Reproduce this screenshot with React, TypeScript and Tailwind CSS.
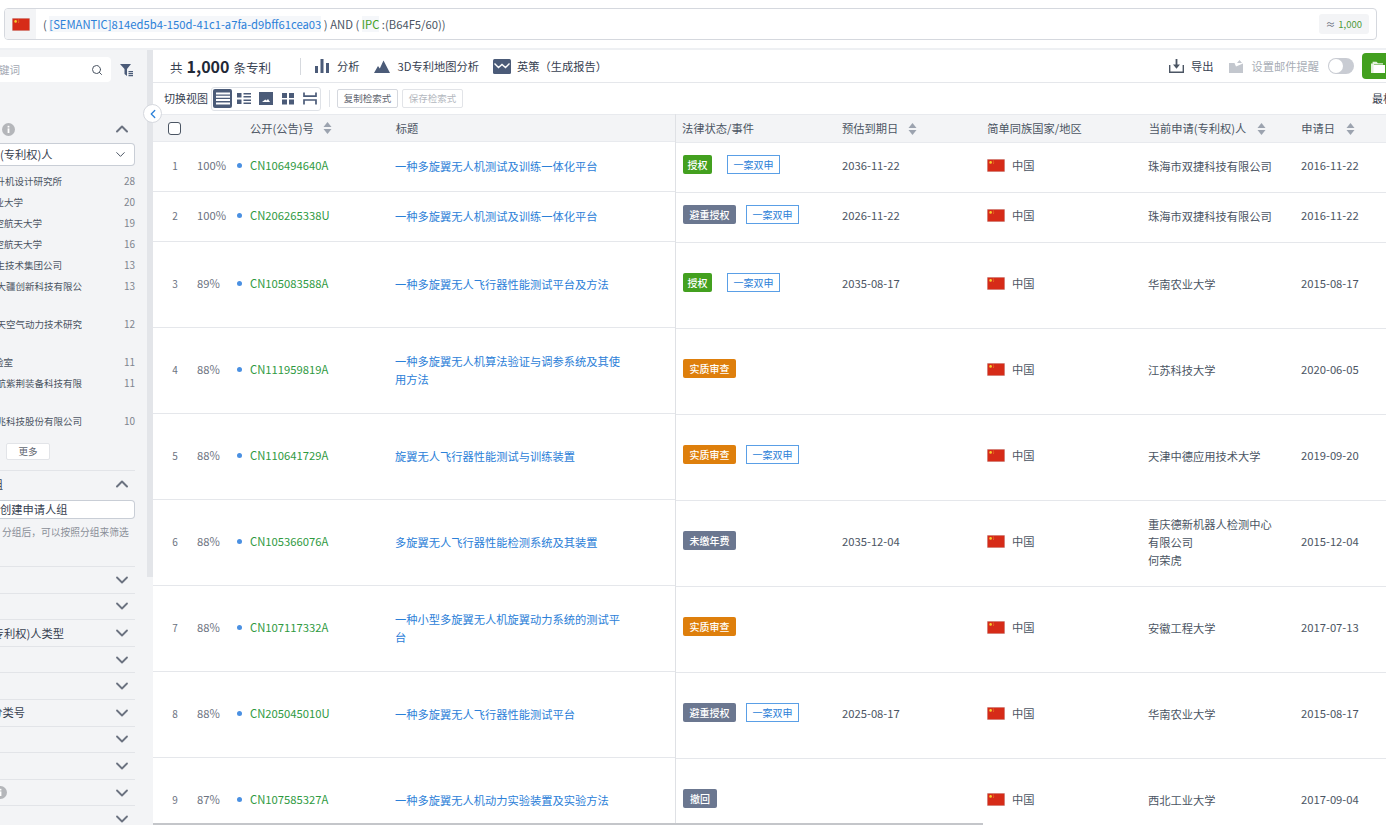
import { ChevronDown, ChevronLeft, ChevronUp, Search } from "lucide-react";

const FONT = "font-['Noto_Sans_CJK_SC','Noto_Sans',sans-serif]";

const APPLICANTS = [
  { name: "升机设计研究所", width: "w-[62px]", cnt: 28, rowH: "h-[17px]" },
  { name: "业大学", width: "w-[23px]", cnt: 20, rowH: "h-[17px]" },
  { name: "空航天大学", width: "w-[42px]", cnt: 19, rowH: "h-[17px]" },
  { name: "空航天大学", width: "w-[42px]", cnt: 16, rowH: "h-[17px]" },
  { name: "生技术集团公司", width: "w-[62px]", cnt: 13, rowH: "h-[17px]" },
  { name: "大疆创新科技有限公", width: "w-[82px]", cnt: 13, rowH: "h-[34px]" },
  { name: "天空气动力技术研究", width: "w-[82px]", cnt: 12, rowH: "h-[34px]" },
  { name: "验室", width: "w-[13px]", cnt: 11, rowH: "h-[17px]" },
  { name: "航紫荆装备科技有限", width: "w-[82px]", cnt: 11, rowH: "h-[34px]" },
  { name: "兆科技股份有限公司", width: "w-[82px]", cnt: 10, rowH: "h-[17px]" },
];

const FOLDED = [
  { label: "", width: "w-0" },
  { label: "", width: "w-0" },
  { label: "专利权)人类型", width: "w-[64px]" },
  { label: "", width: "w-0" },
  { label: "", width: "w-0" },
  { label: "分类号", width: "w-[25px]" },
  { label: "", width: "w-0" },
  { label: "", width: "w-0" },
  { label: "info", width: "w-0" },
  { label: "", width: "w-0" },
];

interface Patent {
  no: number;
  score: string;
  pn: string;
  title: string;
  status: string;
  statusCls: string;
  twin: boolean;
  expire: string;
  applicant: string[];
  date: string;
  rowL: string;
}

const GREEN = "bg-[#43a01f] w-[29px] mr-[5px]";
const GRAY = "bg-[#6b7790] w-[53px]";
const ORANGE = "bg-[#de7f0c] w-[53px]";

const PATENTS: Patent[] = [
  { no: 1, score: "100%", pn: "CN106494640A", title: "一种多旋翼无人机测试及训练一体化平台", status: "授权", statusCls: GREEN, twin: true, expire: "2036-11-22", applicant: ["珠海市双捷科技有限公司"], date: "2016-11-22", rowL: "h-[50px]" },
  { no: 2, score: "100%", pn: "CN206265338U", title: "一种多旋翼无人机测试及训练一体化平台", status: "避重授权", statusCls: GRAY, twin: true, expire: "2026-11-22", applicant: ["珠海市双捷科技有限公司"], date: "2016-11-22", rowL: "h-[50px]" },
  { no: 3, score: "89%", pn: "CN105083588A", title: "一种多旋翼无人飞行器性能测试平台及方法", status: "授权", statusCls: GREEN, twin: true, expire: "2035-08-17", applicant: ["华南农业大学"], date: "2015-08-17", rowL: "h-[86px]" },
  { no: 4, score: "88%", pn: "CN111959819A", title: "一种多旋翼无人机算法验证与调参系统及其使用方法", status: "实质审查", statusCls: ORANGE, twin: false, expire: "", applicant: ["江苏科技大学"], date: "2020-06-05", rowL: "h-[86px]" },
  { no: 5, score: "88%", pn: "CN110641729A", title: "旋翼无人飞行器性能测试与训练装置", status: "实质审查", statusCls: ORANGE, twin: true, expire: "", applicant: ["天津中德应用技术大学"], date: "2019-09-20", rowL: "h-[86px]" },
  { no: 6, score: "88%", pn: "CN105366076A", title: "多旋翼无人飞行器性能检测系统及其装置", status: "未缴年费", statusCls: GRAY, twin: false, expire: "2035-12-04", applicant: ["重庆德新机器人检测中心", "有限公司", "何荣虎"], date: "2015-12-04", rowL: "h-[86px]" },
  { no: 7, score: "88%", pn: "CN107117332A", title: "一种小型多旋翼无人机旋翼动力系统的测试平台", status: "实质审查", statusCls: ORANGE, twin: false, expire: "", applicant: ["安徽工程大学"], date: "2017-07-13", rowL: "h-[86px]" },
  { no: 8, score: "88%", pn: "CN205045010U", title: "一种多旋翼无人飞行器性能测试平台", status: "避重授权", statusCls: GRAY, twin: true, expire: "2025-08-17", applicant: ["华南农业大学"], date: "2015-08-17", rowL: "h-[86px]" },
  { no: 9, score: "87%", pn: "CN107585327A", title: "一种多旋翼无人机动力实验装置及实验方法", status: "撤回", statusCls: "bg-[#6b7790] w-[34px]", twin: false, expire: "", applicant: ["西北工业大学"], date: "2017-09-04", rowL: "h-[86px]" },
];

function Flag() {
  return (
    <svg width="18" height="13" viewBox="0 0 18 13" className="shrink-0">
      <rect width="18" height="13" fill="#d8d8d8" />
      <rect x="0.5" y="0.5" width="17" height="12" fill="#d62b18" />
      <circle cx="3.6" cy="3.4" r="1.3" fill="#f7d02c" />
      <circle cx="6.2" cy="2" r="0.4" fill="#f7d02c" />
      <circle cx="6.8" cy="3.2" r="0.4" fill="#f7d02c" />
      <circle cx="6.6" cy="4.6" r="0.4" fill="#f7d02c" />
    </svg>
  );
}

function SortIcon() {
  return (
    <svg width="9" height="12" viewBox="0 0 9 12" className="shrink-0">
      <path d="M4.5 0 L8.5 5 H0.5 Z" fill="#9ca3af" />
      <path d="M4.5 12 L8.5 7 H0.5 Z" fill="#9ca3af" />
    </svg>
  );
}

function InfoDot() {
  return (
    <svg width="13" height="13" viewBox="0 0 13 13" className="shrink-0">
      <circle cx="6.5" cy="6.5" r="6.5" fill="#b4b6ba" />
      <rect x="5.6" y="5.4" width="1.8" height="4.6" fill="#fff" />
      <rect x="5.6" y="2.8" width="1.8" height="1.7" fill="#fff" />
    </svg>
  );
}

function FilterIcon() {
  return (
    <svg width="13" height="14" viewBox="0 0 13 14" className="shrink-0">
      <path d="M0 1 H11 L7 6 V13 L4.5 11 V6 Z" fill="#4b5b78" />
      <path d="M8.5 8 H13 V9.3 H8.5 Z M8.5 10 H13 V11.3 H8.5 Z M8.5 12 H13 V13.3 H8.5 Z" fill="#4b5b78" />
    </svg>
  );
}

function ViewIcon({ kind, active }: { kind: number; active?: boolean }) {
  const c = active ? "#fff" : "#4b5b78";
  return (
    <div className={`flex h-[19px] w-[19px] items-center justify-center rounded-[2px] ${active ? "bg-[#4b5b78]" : ""}`}>
      <svg width="14" height="13" viewBox="0 0 14 13">
        {kind === 0 && <path d="M0 0.5 H14 V2.5 H0 Z M0 3.8 H14 V5.8 H0 Z M0 7.1 H14 V9.1 H0 Z M0 10.4 H14 V12.4 H0 Z" fill={c} />}
        {kind === 1 && <path d="M0 1 H4.5 V5.5 H0 Z M0 7.5 H4.5 V12 H0 Z M6.5 1 H14 V2.6 H6.5 Z M6.5 4 H14 V5.6 H6.5 Z M6.5 7.5 H14 V9.1 H6.5 Z M6.5 10.4 H14 V12 H6.5 Z" fill={c} />}
        {kind === 2 && <path fillRule="evenodd" d="M0 0 H14 V13 H0 Z M3 10 H11 L9 7 L7.6 8.4 L6.2 7.4 L5 8.6 Z" fill={c} />}
        {kind === 3 && <path d="M1 1 H6 V6 H1 Z M8 1 H13 V6 H8 Z M1 7.5 H6 V12.5 H1 Z M8 7.5 H13 V12.5 H8 Z" fill={c} />}
        {kind === 4 && <path d="M1 0.5 V4.2 H13 V0.5 M1 12.5 V8 H13 V12.5" stroke={c} strokeWidth="1.7" fill="none" />}
      </svg>
    </div>
  );
}

function Sidebar() {
  return (
    <div className="flex w-[153px] shrink-0 bg-[#f3f4f6]">
      <div className="w-[147px] shrink-0 overflow-hidden">
        <div className="w-[135px] pt-[7px]">
          <div className="flex h-[25px] items-center justify-between">
            <div className="flex h-[25px] w-[111px] items-center justify-between rounded-r-[4px] bg-white pr-[8px] text-[10.5px] text-[#a3a8b3]">
              <span className="flex w-[20px] justify-end overflow-hidden whitespace-nowrap">键词</span>
              <Search size={12} strokeWidth={2} className="text-[#4b5563]" />
            </div>
            <div className="mr-[2px]">
              <FilterIcon />
            </div>
          </div>

          <div className="mt-[37px] flex h-[20px] items-center justify-between pl-[2px] pr-[3px]">
            <InfoDot />
            <ChevronUp size={20} strokeWidth={2.4} className="text-[#6b7280]" />
          </div>
          <div className="mt-[4px] flex h-[23px] items-center justify-between rounded-r-[4px] border border-l-0 border-[#c9ced6] bg-white pr-[6px] text-[11.25px] text-[#374151]">
            <span>(专利权)人</span>
            <ChevronDown size={15} strokeWidth={1.6} className="text-[#4b5563]" />
          </div>

          <div className="mt-[7px] flex flex-col gap-[4px]">
            {APPLICANTS.map((a, i) => (
              <div key={i} className={`flex justify-between text-[9.5px] leading-[17px] text-[#4b5563] ${a.rowH}`}>
                <div className={`flex h-[17px] justify-end overflow-hidden whitespace-nowrap ${a.width}`}>{a.name}</div>
                <span className="-mt-[1px] text-[10px] text-[#80858f]">{a.cnt}</span>
              </div>
            ))}
          </div>

          <div className="mt-[13px] flex h-[17px] w-[44px] translate-x-[6px] items-center justify-center rounded-[2px] border border-[#e2e4e8] bg-white text-[9.5px] text-[#5f6670]">
            更多
          </div>

          <div className="mt-[10px] border-t border-[#e2e4e8] pt-[3px]">
            <div className="flex h-[20px] items-center justify-between pr-[3px] text-[11.25px] text-[#374151]">
              <span className="flex w-[3px] justify-end overflow-hidden">组</span>
              <ChevronUp size={20} strokeWidth={2.4} className="text-[#6b7280]" />
            </div>
          </div>
          <div className="mt-[6px] flex h-[19px] items-center rounded-r-[4px] border border-l-0 border-[#c9ced6] bg-white text-[11.25px] text-[#374151]">
            创建申请人组
          </div>
          <div className="mt-[5px] h-[42px] whitespace-nowrap pl-[2px] text-[9.75px] leading-[17px] text-[#8a8f98]">
            分组后，可以按照分组来筛选
          </div>

          {FOLDED.map((row, i) => (
            <div key={i} className="flex h-[26.6px] items-center justify-between border-t border-[#e2e4e8] pr-[3px] text-[11.25px] text-[#374151]">
              {row.label === "info" ? (
                <div className="-ml-[6px]">
                  <InfoDot />
                </div>
              ) : (
                <span className={`flex justify-end overflow-hidden whitespace-nowrap ${row.width}`}>{row.label}</span>
              )}
              <ChevronDown size={20} strokeWidth={2.2} className="text-[#6b7280]" />
            </div>
          ))}
        </div>
      </div>
      <div className="h-[527px] w-[6px] shrink-0 bg-[#e3e5e9]" />
    </div>
  );
}

function TopActions() {
  return (
    <div className="flex h-[33px] items-center justify-between border-b border-[#e5e7eb] pl-[17px] text-[11.25px] text-[#374151]">
      <div className="flex items-center">
        <div className="flex w-[130px] items-baseline whitespace-nowrap text-[12.5px]">
          共<span className="mx-[4px] text-[16px] font-bold text-[#1f2937]">1,000</span>条专利
        </div>
        <div className="h-[17px] w-px bg-[#d6d9de]" />
        <svg width="14" height="14" viewBox="0 0 14 14" className="ml-[14px]">
          <path d="M0 7 H3 V14 H0 Z M5.5 0 H8.5 V14 H5.5 Z M11 4 H14 V14 H11 Z" fill="#4b5b78" />
        </svg>
        <span className="ml-[8px]">分析</span>
        <svg width="16" height="13" viewBox="0 0 16 13" className="ml-[14px]">
          <path d="M0 13 L4 6 L5.8 8.4 L9.5 0.5 L16 13 Z" fill="#4b5b78" />
        </svg>
        <span className="ml-[8px] whitespace-nowrap">3D专利地图分析</span>
        <svg width="18" height="15" viewBox="0 0 18 15" className="ml-[14px]">
          <rect width="18" height="15" rx="1.5" fill="#4b5b78" />
          <path d="M1.5 4.5 L5.5 8.5 L9 5.5 L12.5 8.5 L16.5 4.5" stroke="#fff" strokeWidth="1.4" fill="none" />
        </svg>
        <span className="ml-[6px] whitespace-nowrap">英策（生成报告）</span>
      </div>
      <div className="-mr-[24px] flex items-center">
        <svg width="15" height="14" viewBox="0 0 15 14">
          <path d="M0.7 6 V13.2 H14.3 V6" stroke="#4b5563" strokeWidth="1.4" fill="none" />
          <path d="M6.6 0 H8.4 V5.5 H11 L7.5 9.8 L4 5.5 H6.6 Z" fill="#4b5563" />
        </svg>
        <span className="ml-[7px]">导出</span>
        <svg width="14" height="13" viewBox="0 0 14 13" className="ml-[16px]">
          <path d="M0 3 H5.5 L7 6.5 L14 3.5 V13 H0 Z M8 3 L10.5 0 L13 3 Z" fill="#c3c7ce" />
        </svg>
        <span className="ml-[8px] whitespace-nowrap text-[#a8adb6]">设置邮件提醒</span>
        <div className="ml-[9px] flex h-[16px] w-[26px] items-center rounded-full bg-[#c9ccd3] pl-[1px]">
          <div className="h-[14px] w-[14px] rounded-full bg-white" />
        </div>
        <div className="ml-[8px] flex h-[26px] w-[48px] items-center rounded-[4px] bg-[#43a01f] pl-[9px]">
          <svg width="14" height="13" viewBox="0 0 14 13">
            <path d="M0 3.5 H1.6 V1.8 H5.5 L7 3.2 H12 V4.5 H3 V13 H0 Z" fill="#fff" opacity="0.85" />
            <path d="M2.5 5 H14 V13 H2.5 Z" fill="#fff" />
          </svg>
        </div>
      </div>
    </div>
  );
}

function ViewBar() {
  return (
    <div className="flex h-[31px] items-center justify-between pl-[11px] text-[#374151]">
      <div className="flex items-center">
        <span className="whitespace-nowrap text-[11px]">切换视图</span>
        <div className="ml-[3px] flex h-[24px] w-[110px] items-center justify-between rounded-[3px] border border-[#dfe2e7] px-[1px]">
          <ViewIcon kind={0} active />
          <ViewIcon kind={1} />
          <ViewIcon kind={2} />
          <ViewIcon kind={3} />
          <ViewIcon kind={4} />
        </div>
        <div className="ml-[8px] h-[17px] w-px bg-[#e0e3e8]" />
        <div className="ml-[7px] flex h-[19px] w-[61px] items-center justify-center rounded-[2px] border border-[#d5d8de] text-[9.5px] text-[#5f6670]">
          复制检索式
        </div>
        <div className="ml-[4px] flex h-[19px] w-[61px] items-center justify-center rounded-[2px] border border-[#e2e4e8] text-[9.5px] text-[#b3b7be]">
          保存检索式
        </div>
      </div>
      <span className="w-[14px] overflow-hidden whitespace-nowrap text-[11px] text-[#374151]">最相关</span>
    </div>
  );
}

function Tag({ text, cls }: { text: string; cls: string }) {
  return (
    <div className={`flex h-[19px] items-center justify-center rounded-[2px] text-[10px] font-medium text-white ${cls}`}>
      {text}
    </div>
  );
}

function Table() {
  return (
    <div className="flex">
      <div className="w-[522px] shrink-0">
        <div className="flex h-[28px] items-center border-y border-[#e8eaee] bg-[#f3f4f6] text-[11.25px] text-[#4b5563]">
          <div className="ml-[15px] h-[13px] w-[13px] rounded-[3px] border border-[#4b5563] bg-white" />
          <span className="ml-[69px] whitespace-nowrap">公开(公告)号</span>
          <span className="ml-[9px]"><SortIcon /></span>
          <span className="ml-[64px]">标题</span>
        </div>
        {PATENTS.map((p) => (
          <div key={p.no} className={`flex items-center border-b border-[#e5e7eb] pb-[2px] text-[11.25px] ${p.rowL}`}>
            <span className="w-[44px] text-center text-[10px] text-[#6b7280]">{p.no}</span>
            <span className="w-[40px] text-[#6b7280]">{p.score}</span>
            <span className="h-[5px] w-[5px] rounded-full bg-[#4a90e2]" />
            <span className="ml-[8px] w-[145px] text-[#2f9a3f]">{p.pn}</span>
            <div className="w-[230px] leading-[18px] text-[#2b80d8]">{p.title}</div>
          </div>
        ))}
      </div>
      <div className="min-w-0 flex-1 overflow-hidden border-l border-[#dfe1e5]">
        <div className="flex h-[29px] items-center border-y border-[#e8eaee] bg-[#f3f4f6] pl-[6px] text-[11.25px] text-[#4b5563]">
          <span className="w-[160px] whitespace-nowrap">法律状态/事件</span>
          <span className="whitespace-nowrap">预估到期日</span>
          <span className="ml-[10px]"><SortIcon /></span>
          <span className="ml-[70px] whitespace-nowrap">简单同族国家/地区</span>
          <span className="ml-[67px] whitespace-nowrap">当前申请(专利权)人</span>
          <span className="ml-[11px]"><SortIcon /></span>
          <span className="ml-[35px] whitespace-nowrap">申请日</span>
          <span className="ml-[11px]"><SortIcon /></span>
        </div>
        {PATENTS.map((p) => (
          <div key={p.no} className={`flex items-center border-b border-[#e5e7eb] pb-[4px] pl-[7px] text-[11.25px] text-[#4b5563] ${p.rowL}`}>
            <div className="-mt-[2px] flex w-[159px] shrink-0 gap-[10px]">
              <Tag text={p.status} cls={p.statusCls} />
              {p.twin && (
                <div className="flex h-[19px] w-[53px] items-center justify-center border border-[#5a9fe6] text-[10px] text-[#2b80d8]">
                  一案双申
                </div>
              )}
            </div>
            <span className="w-[145px] shrink-0">{p.expire}</span>
            <div className="flex w-[161px] shrink-0 items-center gap-[7px]">
              <Flag />
              中国
            </div>
            <div className="w-[153px] shrink-0 leading-[18px]">
              {p.applicant.map((line) => (
                <div key={line} className="whitespace-nowrap">{line}</div>
              ))}
            </div>
            <span className="shrink-0">{p.date}</span>
          </div>
        ))}
      </div>
    </div>
  );
}

export default function App() {
  return (
    <div className={`relative h-[825px] w-[1386px] overflow-hidden bg-white ${FONT}`}>
      <div className="h-[50px] border-b-2 border-[#eef0f3] px-[4px] pt-[8px]">
        <div className="flex h-[32px] w-[1373px] items-center overflow-hidden rounded-[4px] border border-[#d5d8de] text-[11.25px] text-[#4b5563]">
          <div className="flex h-full w-[31px] shrink-0 items-center justify-center bg-[#f3f4f6]">
            <Flag />
          </div>
          <div className="ml-[7px] flex-1 whitespace-pre">
            {"( "}
            <span className="bg-[#f5f7fa] text-[#2b80d8]">[SEMANTIC]814ed5b4-150d-41c1-a7fa-d9bff61cea03</span>
            {" ) AND ( "}
            <span className="bg-[#f5f7fa] text-[#43a01f]">IPC</span>
            {" :(B64F5/60))"}
          </div>
          <div className="mr-[7px] flex h-[20px] items-center rounded-[3px] bg-[#f3f4f6] px-[7px] text-[9.5px] text-[#6b7280]">
            ≈<span className="ml-[3px] text-[#4d9a3a]">1,000</span>
          </div>
        </div>
      </div>

      <div className="flex h-[775px] overflow-hidden">
        <Sidebar />
        <div className="min-w-0 flex-1">
          <TopActions />
          <ViewBar />
          <Table />
        </div>
      </div>

      <div className="absolute left-[143px] top-[104px] flex h-[19px] w-[19px] items-center justify-center rounded-full border border-[#d5d8de] bg-white">
        <ChevronLeft size={14} strokeWidth={2.2} className="text-[#2b80d8]" />
      </div>
      <div className="absolute bottom-0 left-[153px] h-[2px] w-[830px] bg-[#c4c6ca]" />
    </div>
  );
}
